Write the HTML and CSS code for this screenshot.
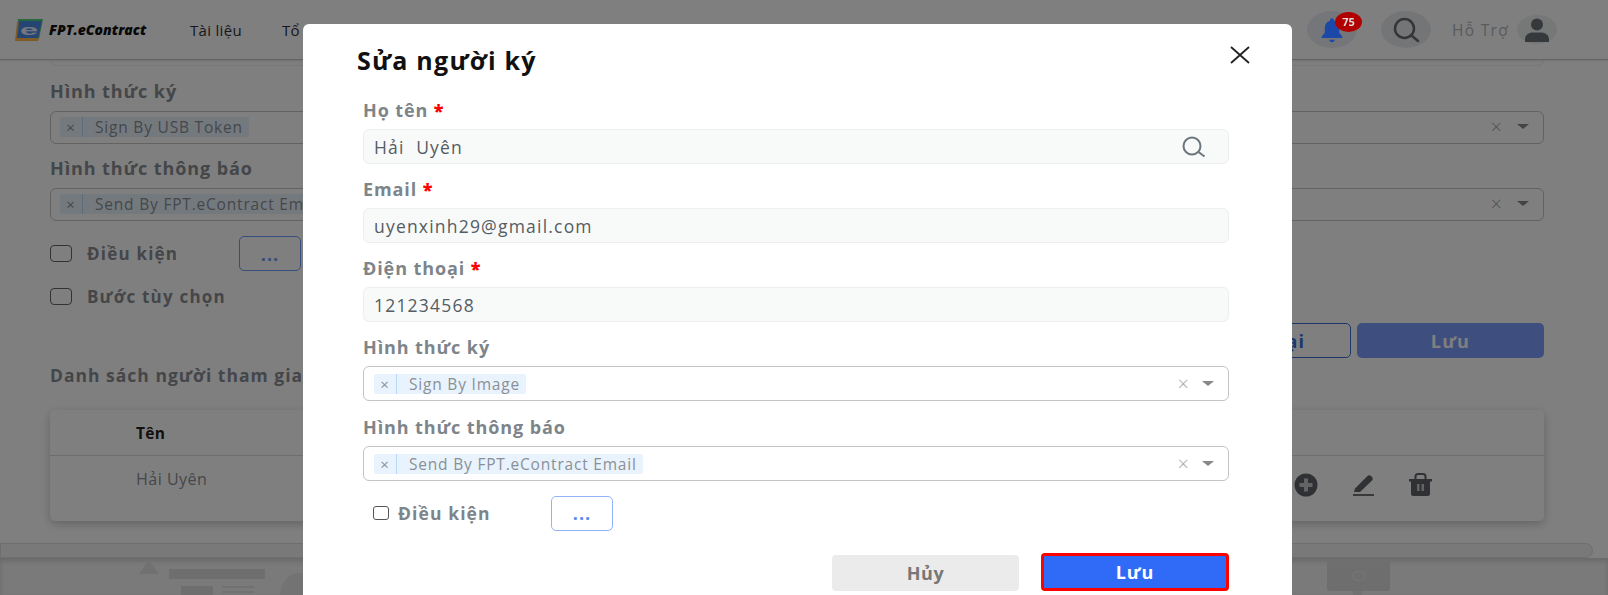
FILE: index.html
```html
<!DOCTYPE html>
<html>
<head>
    <title>FPT.eContract</title>
    <meta charset="utf-8">
    <link rel="stylesheet" href="styles.css">
</head>
<body>
    <div class="page">
        <div class="header">
            <div class="logo">
                <svg class="logo-mark" width="28" height="22" viewBox="0 0 28 22">
                    <path d="M3 0h25l-4 20H1z" fill="#4fd07a"/>
                    <path d="M2 3h5L5 19h19l-1 3H0z" fill="#ffb84d"/>
                    <path d="M4 2h23l-4 17H2z" fill="#4b8de8"/>
                    <text x="5" y="15.500" class="logo-e" textLength="18" lengthAdjust="spacingAndGlyphs">e</text>
                </svg>
                <span class="logo-text">FPT.eContract</span>
            </div>
            <div class="nav">
                <span class="nav-item">Tài liệu</span>
                <span class="nav-item">Tổ chức</span>
            </div>
            <div class="header-right">
                <div class="round-btn bell-btn">
                    <svg class="bell-icon" width="26" height="28" viewBox="0 0 24 26">
                        <path d="M12 2c-1 0-1.800.8-1.800 1.800v.7C7 5.400 5.300 8 5.300 11v4.500L2.500 19v1.500h19V19l-2.800-3.500V11c0-3-1.700-5.600-4.900-6.500v-.7C13.800 2.800 13 2 12 2z" fill="#1c48a8"/>
                        <path d="M9.500 22h5c0 1.300-1.100 2.300-2.500 2.300S9.500 23.300 9.500 22z" fill="#1c48a8"/>
                    </svg>
                    <span class="badge">75</span>
                </div>
                <div class="round-btn search-btn">
                    <svg width="30" height="30" viewBox="0 0 30 30" fill="none" stroke="#666c72" stroke-width="2.500">
                        <circle cx="13.500" cy="13.500" r="9.500"/>
                        <path d="M20.500 20.500l6.500 5.500" stroke-linecap="round"/>
                    </svg>
                </div>
                <span class="support">Hỗ Trợ</span>
                <div class="avatar">
                    <svg width="24" height="24" viewBox="0 0 24 24" fill="#6c7278">
                        <circle cx="12" cy="6.500" r="6"/>
                        <path d="M0 24v-2.500C0 17 4 14.500 8 14.500h8c4 0 8 2.500 8 7V24z"/>
                    </svg>
                </div>
            </div>
        </div>

        <div class="content">
            <div class="cut-input"></div>

            <div class="bg-label first">Hình thức ký</div>
            <div class="bg-select">
                <span class="tag"><span class="tag-x">×</span><span class="tag-text">Sign By USB Token</span></span>
                <span class="select-x">×</span>
                <span class="select-arrow"></span>
            </div>

            <div class="bg-label">Hình thức thông báo</div>
            <div class="bg-select">
                <span class="tag"><span class="tag-x">×</span><span class="tag-text">Send By FPT.eContract Email</span></span>
                <span class="select-x">×</span>
                <span class="select-arrow"></span>
            </div>

            <div class="check-row">
                <span class="bg-check"></span>
                <span class="bg-check-label">Điều kiện</span>
                <button class="dots-btn">...</button>
            </div>
            <div class="check-row optional">
                <span class="bg-check"></span>
                <span class="bg-check-label">Bước tùy chọn</span>
            </div>

            <div class="bg-actions">
                <button class="back-btn">Quay lại</button>
                <button class="bg-save">Lưu</button>
            </div>

            <div class="list-title">Danh sách người tham gia</div>

            <div class="table">
                <div class="table-head">Tên</div>
                <div class="table-row">
                    <span>Hải Uyên</span>
                    <div class="row-icons">
                        <svg width="24" height="24" viewBox="0 0 24 24">
                            <circle cx="12" cy="12" r="11.500" fill="#5f6368"/>
                            <path d="M10 5.500h4V10h4.500v4H14v4.500h-4V14H5.500v-4H10z" fill="#c9c9c9"/>
                        </svg>
                        <svg width="22" height="24" viewBox="0 0 22 24">
                            <path d="M2 15.500L14.500 3c1-1 2.500-1 3.500 0l1 1c1 1 1 2.500 0 3.500L7 19H1z" fill="#5f6368"/>
                            <path d="M0 22h21" stroke="#5f6368" stroke-width="1.800"/>
                        </svg>
                        <svg width="23" height="24" viewBox="0 0 23 24">
                            <path d="M0 6h23v2.500H21V21c0 1.200-1 2-2 2H4c-1 0-2-.8-2-2V8.500H0z" fill="#5f6368"/>
                            <path d="M6.500 6V3.500C6.500 2 7.500 1 9 1h5c1.500 0 2.500 1 2.500 2.500V6" fill="none" stroke="#5f6368" stroke-width="2"/>
                            <path d="M8 11h2.500v7H8zM12.500 11H15v7h-2.500z" fill="#c9c9c9"/>
                        </svg>
                    </div>
                </div>
            </div>

            <div class="scroll-track"></div>
        </div>

        <div class="footer-art">
            <span class="art-triangle"></span>
            <span class="art-bar"></span>
            <span class="art-block"></span>
            <span class="art-line one"></span>
            <span class="art-line two"></span>
            <span class="art-leaf"></span>
            <span class="art-sign"><i></i></span>
            <span class="art-post"></span>
        </div>
    </div>

    <div class="overlay">
        <div class="modal">
            <div class="modal-head">
                <h2>Sửa người ký</h2>
                <svg class="close-icon" width="20" height="20" viewBox="0 0 20 20" stroke="#222" stroke-width="1.800">
                    <path d="M1 2l18 16M19 2L1 18"/>
                </svg>
            </div>

            <div class="field">
                <label>Họ tên <b>*</b></label>
                <div class="input">
                    Hải&nbsp; Uyên
                    <svg class="input-icon" width="26" height="22" viewBox="0 0 26 22" fill="none" stroke="#6c757d" stroke-width="2">
                        <circle cx="12" cy="10" r="8.500"/>
                        <path d="M18.500 16l6 4.500"/>
                    </svg>
                </div>
            </div>

            <div class="field">
                <label>Email <b>*</b></label>
                <div class="input">uyenxinh29@gmail.com</div>
            </div>

            <div class="field">
                <label>Điện thoại <b>*</b></label>
                <div class="input">121234568</div>
            </div>

            <div class="field select-field">
                <label>Hình thức ký</label>
                <div class="select">
                    <span class="tag"><span class="tag-x">×</span><span class="tag-text">Sign By Image</span></span>
                    <span class="select-x">×</span>
                    <span class="select-arrow"></span>
                </div>
            </div>

            <div class="field select-field">
                <label>Hình thức thông báo</label>
                <div class="select">
                    <span class="tag"><span class="tag-x">×</span><span class="tag-text">Send By FPT.eContract Email</span></span>
                    <span class="select-x">×</span>
                    <span class="select-arrow"></span>
                </div>
            </div>

            <div class="condition">
                <span class="check"></span>
                <span class="condition-label">Điều kiện</span>
                <button class="modal-dots">...</button>
            </div>

            <div class="modal-actions">
                <button class="cancel-btn">Hủy</button>
                <button class="save-btn">Lưu</button>
            </div>
        </div>
    </div>
</body>
</html>
```

FILE: styles.css
```css
* { box-sizing: border-box; }

html, body {
    margin: 0;
    height: 100%;
    overflow: hidden;
}

body {
    background: #fff;
    color: #6c757d;
    font-family: "Open Sans", Arial, sans-serif;
    font-size: 15px;
}

button {
    font-family: inherit;
    cursor: pointer;
}

.page {
    height: 595px;
    overflow: hidden;
    display: flex;
    flex-direction: column;
}

.header {
    display: flex;
    align-items: center;
    flex: 0 0 60px;
    padding: 0 51px 0 15px;
    background: #fff;
    border-bottom: 1px solid #c4c4c4;
    box-shadow: 0 1px 2px rgba(0,0,0,0.1);
    position: relative;
}

.logo {
    display: flex;
    align-items: center;
    gap: 6px;
    width: 175px;
}

.logo-e {
    font-family: "Liberation Sans", Arial, sans-serif;
    font-size: 15px;
    font-weight: bold;
    fill: #e8eefb;
}

.logo-text {
    font-size: 14px;
    font-style: italic;
    font-weight: 800;
    color: #111;
}

.nav {
    display: flex;
    gap: 40px;
    color: #332f3d;
    font-size: 15px;
    letter-spacing: 0.3px;
}

.header-right {
    margin-left: auto;
    display: flex;
    align-items: center;
}

.round-btn {
    position: relative;
    display: flex;
    align-items: center;
    justify-content: center;
    width: 50px;
    height: 37px;
    border-radius: 50%;
}

.bell-btn {
    background: #e8edf5;
    margin-right: 24px;
}

.bell-icon {
    position: relative;
    z-index: 11;
}

.search-btn { background: #e9ebee; }

/* sits above the dim layer, the reference keeps it bright */
.badge {
    position: absolute;
    z-index: 11;
    top: 1px;
    right: -5px;
    min-width: 27px;
    height: 20px;
    padding: 0 3px;
    background: #b00000;
    color: #ddd;
    border-radius: 50%;
    font-size: 11px;
    font-weight: 700;
    line-height: 20px;
    text-align: center;
}

.support {
    margin-left: 21px;
    font-size: 15.5px;
    letter-spacing: 1.3px;
    color: #b0b6bc;
}

.avatar {
    display: flex;
    align-items: center;
    justify-content: center;
    width: 40px;
    height: 29px;
    margin-left: 8px;
    background: #eceeef;
    border-radius: 50%;
}

.content {
    flex: 0 0 498px;
    padding: 0 64px 0 50px;
    background: #fff;
}

.cut-input {
    height: 6px;
    border: 1px solid #eceeef;
    border-top: none;
    border-radius: 0 0 6px 6px;
    background: #fbfcfc;
}

.bg-label {
    margin-top: 14px;
    margin-bottom: 9px;
    font-size: 18px;
    line-height: 21px;
    letter-spacing: 0.9px;
    font-weight: 700;
    color: #888d92;
}

.bg-label.first { margin-top: 15px; }

.bg-select, .select {
    display: flex;
    align-items: center;
    background: #fff;
    border-radius: 6px;
    border: 1.5px solid #c4c4c4;
}

.bg-select {
    height: 33px;
    padding: 0 14px 2px 9px;
}

.bg-select .select-x { margin-right: 15px; }

.tag {
    display: inline-flex;
    align-items: center;
    height: 20px;
    background: #e9f3fd;
    border-radius: 2px;
    font-size: 15.5px;
    letter-spacing: 0.8px;
    color: #8a9096;
    white-space: nowrap;
}

.tag-x {
    width: 23px;
    text-align: center;
    color: #8a9096;
    font-size: 15px;
    border-right: 1px solid #b9d8f8;
    line-height: 20px;
}

.tag-text {
    padding: 0 6px 0 12px;
}

.select-x {
    margin-left: auto;
    margin-right: 13px;
    font-size: 20px;
    line-height: 20px;
    font-weight: 300;
    color: #a5a5a5;
}

.select-arrow {
    width: 0;
    height: 0;
    border-left: 6px solid transparent;
    border-right: 6px solid transparent;
    border-top: 5px solid #888;
}

.check-row {
    display: flex;
    align-items: center;
    height: 35px;
    margin-top: 15px;
}

.check-row.optional {
    height: 22px;
    margin-top: 14px;
}

.bg-check {
    width: 22px;
    height: 17px;
    border: 1.5px solid #666;
    border-radius: 4px;
}

.bg-check-label {
    margin-left: 15px;
    width: 152px;
    font-size: 17px;
    letter-spacing: 1.2px;
    font-weight: 700;
    color: #888d92;
    white-space: nowrap;
}

.dots-btn {
    width: 62px;
    height: 35px;
    background: #fff;
    border: 1px solid #6c9cf8;
    border-radius: 5px;
    color: #6c9cf8;
    font-size: 18px;
    font-weight: 700;
    letter-spacing: 1px;
    line-height: 20px;
}

.bg-actions {
    display: flex;
    justify-content: flex-end;
    gap: 6px;
    margin-top: 16px;
}

.back-btn, .bg-save {
    height: 35px;
    border-radius: 5px;
    font-size: 18px;
    letter-spacing: 1.2px;
    font-weight: 700;
}

.back-btn {
    width: 175px;
    background: #fff;
    border: 1px solid #3a6fd8;
    color: #3a6fd8;
}

.bg-save {
    width: 187px;
    background: #7c9efe;
    border: none;
    color: #fff;
}

.list-title {
    margin-top: 7px;
    font-size: 17.5px;
    line-height: 21px;
    letter-spacing: 1px;
    font-weight: 700;
    color: #888d92;
}

.table {
    margin-top: 24px;
    height: 111px;
    background: #fff;
    border-radius: 5px;
    box-shadow: 0 3px 10px rgba(0,0,0,0.22);
}

.table-head {
    height: 46px;
    padding: 12px 0 0 86px;
    font-size: 15.5px;
    letter-spacing: 0.3px;
    font-weight: 700;
    color: #222;
    border-bottom: 1px solid #ddd;
}

.table-row {
    display: flex;
    align-items: flex-start;
    padding: 12px 112px 0 86px;
    font-size: 16px;
    letter-spacing: 0.5px;
    color: #8a8f94;
}

.row-icons {
    display: flex;
    gap: 34.5px;
    margin-left: auto;
    padding-top: 5px;
}

.scroll-track {
    height: 15px;
    margin: 22px -49px 0 -50px;
    background: #f2f2f2;
    border: 1px solid #ddd;
    border-radius: 0 8px 8px 0;
}

.footer-art {
    flex: 1;
    position: relative;
    background: #f4f4f4;
    box-shadow: inset 0 3px 5px rgba(0,0,0,0.15);
}

.art-triangle {
    position: absolute;
    left: 139px;
    top: 2px;
    border-left: 10px solid transparent;
    border-right: 10px solid transparent;
    border-bottom: 14px solid #e2e2e2;
}

.art-bar {
    position: absolute;
    left: 169px;
    top: 11px;
    width: 96px;
    height: 10px;
    background: #dcdcdc;
}

.art-block {
    position: absolute;
    left: 181px;
    top: 28px;
    width: 32px;
    height: 12px;
    background: #dcdcdc;
}

.art-line {
    position: absolute;
    left: 222px;
    width: 32px;
    height: 2px;
    background: #e2e2e2;
}

.art-line.one { top: 28px; }
.art-line.two { top: 33px; }

.art-leaf {
    position: absolute;
    left: 280px;
    top: 15px;
    width: 30px;
    height: 40px;
    background: #e6e6e6;
    border-radius: 60% 0 60% 0;
}

.art-sign {
    position: absolute;
    left: 1327px;
    top: 3px;
    width: 63px;
    height: 30px;
    background: #dcdcdc;
    border-radius: 2px;
}

.art-sign i {
    position: absolute;
    left: 25px;
    top: 10px;
    width: 14px;
    height: 10px;
    border: 1.5px solid #eee;
    border-radius: 50%;
}

.art-post {
    position: absolute;
    left: 1353px;
    top: 33px;
    width: 9px;
    height: 10px;
    background: #e2e2e2;
}

.overlay {
    position: fixed;
    inset: 0;
    z-index: 10;
    background: rgba(0,0,0,0.5);
    overflow: hidden;
}

.modal {
    width: 989px;
    margin: 24px 0 0 303px;
    height: 600px;
    padding: 0 63px 0 60px;
    background: #fff;
    border-radius: 6px 6px 0 0;
}

.modal-head {
    display: flex;
    align-items: center;
    justify-content: space-between;
    height: 71px;
    margin-left: -6px;
    margin-right: -21px;
}

.modal-head h2 {
    margin: 0;
    font-size: 25px;
    letter-spacing: 1.25px;
    font-weight: 700;
    color: #111;
}

.close-icon { margin-top: -10px; }

.field { margin-bottom: 10px; }

.field.select-field { margin-bottom: 11px; }

.field label {
    display: block;
    height: 34px;
    font-size: 18px;
    line-height: 30px;
    letter-spacing: 0.9px;
    font-weight: 700;
    color: #7d848a;
}

.field label b { color: #ff0000; }

.input {
    display: flex;
    align-items: center;
    height: 35px;
    padding: 0 10px;
    background: #f8fafa;
    border: 1px solid #eceeef;
    border-radius: 6px;
    font-size: 17.5px;
    letter-spacing: 1.2px;
    color: #555c62;
}

.input-icon {
    margin-left: auto;
    margin-right: 12px;
}

.select {
    height: 35px;
    padding: 0 14px 0 10px;
}

.condition {
    display: flex;
    align-items: center;
    height: 35px;
    margin-top: 14.5px;
    padding-left: 10px;
}

.check {
    width: 16px;
    height: 14px;
    border: 1.5px solid #555;
    border-radius: 3px;
}

.condition-label {
    width: 153px;
    margin-left: 9px;
    font-weight: 700;
    font-size: 17.5px;
    letter-spacing: 1.1px;
    color: #7d848a;
}

.modal-dots {
    width: 62px;
    height: 35px;
    background: #fff;
    border: 1.500px solid #8fb4fb;
    border-radius: 5px;
    color: #5c8df6;
    font-size: 18px;
    font-weight: 700;
    letter-spacing: 1px;
    line-height: 20px;
}

.modal-actions {
    display: flex;
    justify-content: flex-end;
    align-items: flex-end;
    gap: 22px;
    margin-top: 22px;
}

.cancel-btn, .save-btn {
    font-size: 18px;
    font-weight: 700;
    border-radius: 4px;
}

.cancel-btn {
    width: 187px;
    height: 36px;
    letter-spacing: 0.5px;
    background: #ebebeb;
    border: none;
    color: #777;
}

.save-btn {
    width: 188px;
    height: 38px;
    letter-spacing: 1px;
    background: #2f6bf6;
    border: 3px solid #ff0000;
    color: #fff;
}
```
